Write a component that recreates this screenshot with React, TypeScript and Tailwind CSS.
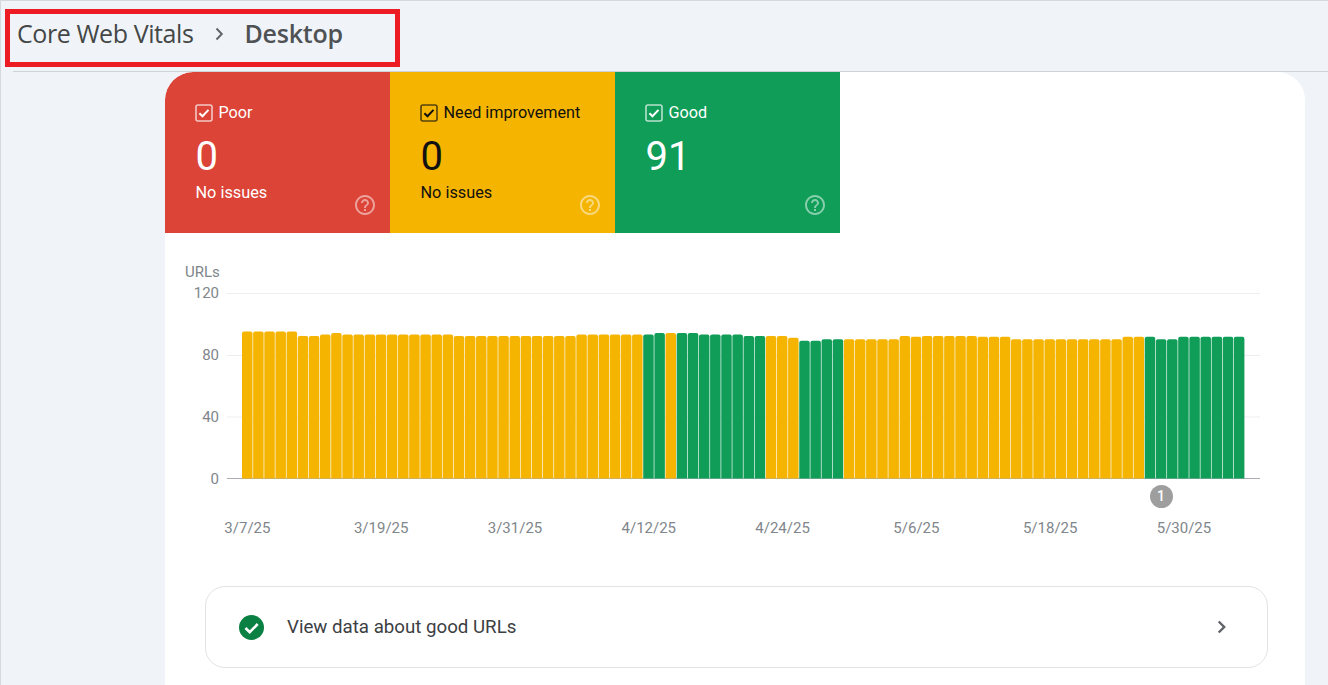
const heights = [
  95, 95, 95, 95, 95, 92, 92, 93, 94, 93, 93, 93, 93, 93, 93, 93, 93, 93, 93, 92,
  92, 92, 92, 92, 92, 92, 92, 92, 92, 92, 93, 93, 93, 93, 93, 93, 93, 94, 94, 94,
  94, 93, 93, 93, 93, 92, 92, 92, 92, 91, 89, 89, 90, 90, 90, 90, 90, 90, 90, 92,
  91.5, 92, 92, 92, 92, 92, 91.5, 91.5, 91.5, 90, 90, 90, 90, 90, 90, 90, 90, 90, 90, 91.5,
  91.5, 91.5, 90, 90, 91.5, 91.5, 91.5, 91.5, 91.5, 91.5,
]

const greenBars = [36, 37, 39, 40, 41, 42, 43, 44, 45, 46, 50, 51, 52, 53, 81, 82, 83, 84, 85, 86, 87, 88, 89]
const dates = ['3/7/25', '3/19/25', '3/31/25', '4/12/25', '4/24/25', '5/6/25', '5/18/25', '5/30/25']

function CheckBox() {
  return (
    <svg width="18" height="18" viewBox="0 0 18 18" fill="none" className="shrink-0">
      <rect x="1" y="1" width="16" height="16" rx="2" stroke="currentColor" strokeOpacity="0.7" strokeWidth="1.6" />
      <path d="M4.4 9.2l3.1 3.1 6-6.4" stroke="currentColor" strokeWidth="2" />
    </svg>
  )
}

function Help() {
  return (
    <svg width="24" height="24" viewBox="0 0 24 24" fill="#fff" className="absolute right-[13px] bottom-[16px] opacity-50">
      <path d="M11 18h2v-2h-2v2zm1-16C6.48 2 2 6.48 2 12s4.48 10 10 10 10-4.48 10-10S17.52 2 12 2zm0 18c-4.41 0-8-3.59-8-8s3.59-8 8-8 8 3.59 8 8-3.59 8-8 8zm0-14c-2.21 0-4 1.79-4 4h2c0-1.1.9-2 2-2s2 .9 2 2c0 2-3 1.75-3 5h2c0-2.25 3-2.5 3-5 0-2.21-1.79-4-4-4z" />
    </svg>
  )
}

function Tile({ label, value, note, className }: { label: string; value: string; note?: string; className: string }) {
  return (
    <div className={'relative w-[225px] h-[161px] pl-[30px] pt-[31px] ' + className}>
      <div className="flex items-center gap-[6px] h-[20px] text-[16.2px] leading-[20px] -ml-[0.5px]">
        <CheckBox />
        <span>{label}</span>
      </div>
      <div className="mt-[10px] text-[40px] leading-[48px] ml-[0.5px]">{value}</div>
      {note && <div className="mt-[2px] text-[16.3px] leading-[20px] ml-[0.5px]">{note}</div>}
      <Help />
    </div>
  )
}

function Chart() {
  const pitch = 11.145
  const scale = 1.5425
  return (
    <svg width="1033" height="190" viewBox="0 0 1033 190" className="block">
      {[0.5, 62.5, 124].map((y) => (
        <line key={y} x1="0" x2="1033" y1={y} y2={y} stroke="#eceef1" strokeWidth="1" />
      ))}
      <line x1="0" x2="1033" y1="185.5" y2="185.5" stroke="#a9adb2" strokeWidth="1" />
      {heights.map((h, i) => {
        const x = 15 + i * pitch
        const top = 185 - h * scale
        const w = 10.5
        return (
          <path
            key={i}
            d={`M${x} 185.4V${top + 2}q0-2 2-2h${w - 4}q2 0 2 2V185.4z`}
            fill={greenBars.includes(i) ? '#0f9d58' : '#f4b400'}
          />
        )
      })}
    </svg>
  )
}

export default function App() {
  return (
    <div className="w-[1328px] h-[685px] overflow-hidden bg-[#f0f4f9] border-t border-l border-[#d5d8dc] font-['Roboto',sans-serif]">
      <div className="h-[71px] ml-[12px] border-b border-[#cfd2d6] pt-[8px]">
        <div className="-ml-[8px] w-[395px] h-[58px] border-[5px] border-[#ed1c24] flex items-center pl-[7px] pb-[8px] text-[#444746] text-[25px] font-['Open_Sans',sans-serif]">
          <span className="tracking-[-0.42px]">Core Web Vitals</span>
          <svg width="24" height="24" viewBox="0 0 24 24" fill="none" className="ml-[14px] mr-[13px]">
            <path d="M9.5 6.5l5.3 5.5-5.3 5.5" stroke="#5f6368" strokeWidth="1.9" />
          </svg>
          <span className="font-semibold tracking-[-0.2px] text-[#4f5254]">Desktop</span>
        </div>
      </div>

      <div className="ml-[164px] w-[1140px] h-[620px] bg-white rounded-t-[28px] overflow-hidden">
        <div className="flex">
          <Tile label="Poor" value="0" note="No issues" className="bg-[#db4437] text-white rounded-tl-[28px]" />
          <Tile label="Need improvement" value="0" note="No issues" className="bg-[#f4b400] text-[#111]" />
          <Tile label="Good" value="91" className="bg-[#0f9d58] text-white" />
        </div>

        <div className="pt-[30px] text-[#80868b]">
          <div className="ml-[20px] text-[15px] leading-[18px]">URLs</div>
          <div className="flex mt-[12px]">
            <div className="w-[54px] h-[204px] flex flex-col justify-between items-end text-[15px] leading-[18px] -mt-[9px]">
              <span>120</span>
              <span>80</span>
              <span>40</span>
              <span>0</span>
            </div>
            <div className="ml-[8px]">
              <Chart />
            </div>
          </div>
          <div className="ml-[984.5px] w-[23px] h-[23px] -mt-[3px] rounded-full bg-[#9e9e9e] text-white text-[14px] font-medium flex items-center justify-center">1</div>
          <div className="flex ml-[15.5px] mt-[10px] text-[15px] leading-[20px]">
            {dates.map((d) => (
              <div key={d} className="w-[133.8px] text-center">{d}</div>
            ))}
          </div>
        </div>

        <div className="ml-[40px] mt-[48px] w-[1063px] h-[82px] border border-[#e3e3e3] rounded-[20px] flex items-center pl-[33px] pr-[33px]">
          <svg width="25" height="25" viewBox="0 0 25 25" className="shrink-0">
            <circle cx="12.5" cy="12.5" r="12.5" fill="#0b8043" />
            <path d="M6.5 13l4.2 4.2 8-8.2" fill="none" stroke="#fff" strokeWidth="2.6" />
          </svg>
          <span className="ml-[23px] text-[18.7px] text-[#3c4043]">View data about good URLs</span>
          <svg width="24" height="24" viewBox="0 0 24 24" fill="none" className="ml-auto">
            <path d="M8.7 6.5l5.5 5.5-5.5 5.5" stroke="#5f6368" strokeWidth="2.4" />
          </svg>
        </div>
      </div>
    </div>
  )
}
